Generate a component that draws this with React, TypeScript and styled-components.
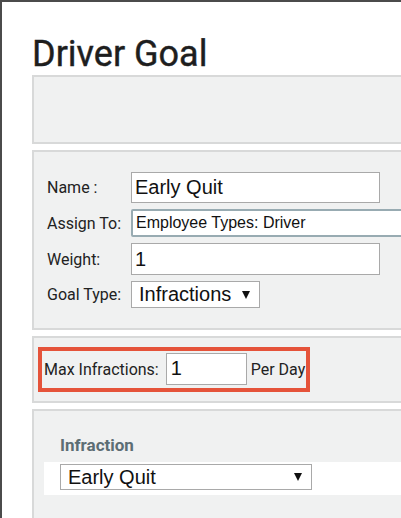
import React from "react";
import styled, { createGlobalStyle } from "styled-components";

const GlobalStyle = createGlobalStyle`
  html, body {
    margin: 0;
    padding: 0;
    background: #ffffff;
  }
  * {
    box-sizing: border-box;
  }
`;

const Page = styled.div`
  height: 100vh;
  overflow: hidden;
  border-top: 2px solid #4b4b4b;
  border-left: 2px solid #4b4b4b;
  padding-left: 30px;
  background: #ffffff;
  font-family: Roboto, "Liberation Sans", Arial, sans-serif;
`;

const Title = styled.h1`
  margin: 0;
  padding-top: 31px;
  font-size: 36px;
  line-height: 42px;
  font-weight: 400;
  color: #1e1e1e;
  -webkit-text-stroke: 0.4px #1e1e1e;
`;

const Panel = styled.div<{ h?: number }>`
  width: 420px;
  height: ${(p) => (p.h ? `${p.h}px` : "auto")};
  background: #f0f1f1;
  border: 2px solid #d8d9d9;
  margin-bottom: 6px;
`;

const FormPanel = styled(Panel)`
  padding: 20px 0 20px 13px;
`;

const FormGrid = styled.div`
  display: grid;
  grid-template-columns: 84px auto;
  row-gap: 6px;
  align-items: center;
`;

const Label = styled.label`
  font-size: 16px;
  color: #222222;
  white-space: nowrap;
`;

const TextInput = styled.div<{ w: number; h: number; focused?: boolean }>`
  width: ${(p) => p.w}px;
  height: ${(p) => p.h}px;
  display: flex;
  align-items: center;
  background: #ffffff;
  border: ${(p) => (p.focused ? "2px solid #98abb2" : "1px solid #a9a9a9")};
  border-radius: ${(p) => (p.focused ? "2px" : "0")};
  padding: 0 3px;
  font-family: "Liberation Sans", Arial, sans-serif;
  font-size: ${(p) => (p.focused ? "16px" : "20px")};
  color: #111111;
  white-space: nowrap;
  overflow: hidden;
`;

const SelectBox = styled.div<{ w?: number; h?: number }>`
  width: ${(p) => (p.w ? `${p.w}px` : "auto")};
  height: ${(p) => p.h ?? 27}px;
  display: inline-flex;
  align-items: center;
  justify-content: space-between;
  gap: 11px;
  justify-self: start;
  background: #ffffff;
  border: 1px solid #a9a9a9;
  padding: 0 9px 0 7px;
  font-family: "Liberation Sans", Arial, sans-serif;
  font-size: 20px;
  color: #111111;
  white-space: nowrap;
`;

const Arrow = styled.span`
  width: 0;
  height: 0;
  border-left: 4.5px solid transparent;
  border-right: 4.5px solid transparent;
  border-top: 8px solid #111111;
`;

const LimitPanel = styled(Panel)`
  padding: 9px 0 0 4px;
`;

const Highlight = styled.div`
  display: inline-flex;
  align-items: center;
  border: 4px solid #e5533a;
  padding: 2px 1px 3px 2px;
  height: 45px;
`;

const InlineText = styled.span<{ ml?: number }>`
  font-size: 16px;
  color: #222222;
  margin-left: ${(p) => p.ml ?? 0}px;
  white-space: nowrap;
`;

const SmallInput = styled(TextInput)`
  margin-left: 7px;
  padding-left: 4px;
  align-items: flex-start;
  padding-top: 3px;
`;

const InfractionPanel = styled(Panel)`
  min-height: 130px;
  padding: 24px 0 0 10px;
`;

const SectionHeading = styled.div`
  padding-left: 16px;
  margin-bottom: 7px;
  font-size: 17px;
  line-height: 20px;
  font-weight: 700;
  color: #5c6d74;
`;

const SelectRow = styled.div`
  background: #ffffff;
  padding: 2px 0 5px 16px;
`;

const App: React.FC = () => {
  return (
    <Page>
      <GlobalStyle />
      <Title>Driver Goal</Title>

      <Panel h={69} />

      <FormPanel>
        <FormGrid>
          <Label>Name :</Label>
          <TextInput w={249} h={31}>
            Early Quit
          </TextInput>

          <Label>Assign To:</Label>
          <TextInput w={300} h={28} focused>
            Employee Types: Driver
          </TextInput>

          <Label>Weight:</Label>
          <TextInput w={249} h={32}>
            1
          </TextInput>

          <Label>Goal Type:</Label>
          <SelectBox>
            <span>Infractions</span>
            <Arrow />
          </SelectBox>
        </FormGrid>
      </FormPanel>

      <LimitPanel h={67}>
        <Highlight>
          <InlineText>Max Infractions:</InlineText>
          <SmallInput w={81} h={32}>
            1
          </SmallInput>
          <InlineText ml={4}>Per Day</InlineText>
        </Highlight>
      </LimitPanel>

      <InfractionPanel>
        <SectionHeading>Infraction</SectionHeading>
        <SelectRow>
          <SelectBox w={252} h={26}>
            <span>Early Quit</span>
            <Arrow />
          </SelectBox>
        </SelectRow>
      </InfractionPanel>
    </Page>
  );
};

export default App;
